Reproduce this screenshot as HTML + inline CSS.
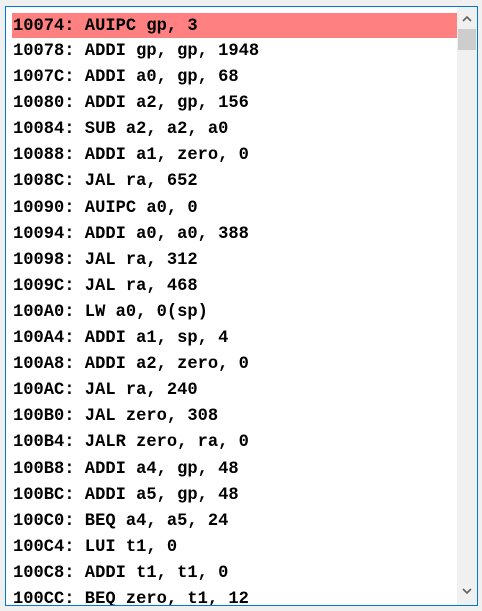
<!DOCTYPE html>
<html><head><style>
body{margin:0;width:482px;height:611px;background:#f0f0f0;position:relative;overflow:hidden}
.box{position:absolute;left:5px;top:6px;width:471px;height:598px;border:1px solid #0078d7;background:#fff;overflow:hidden}
.list{position:absolute;left:6px;top:6px;width:447px}
.r{height:26.1px;line-height:26px;font:bold 17.1px "Liberation Mono",monospace;color:#000;padding-left:1px;white-space:pre}
.r span{position:relative;top:4px}
.r.h{background:#ff8080;height:25px}
.sb{position:absolute;right:0;top:0;width:20px;height:598px;background:#f0f0f0}
.th{position:absolute;left:1px;top:22px;width:18px;height:21px;background:#cdcdcd}
.a{position:absolute;left:5px;width:10px;height:8px}
</style></head><body>
<div class="box">
<div class="list">
<div class="r h"><span>10074: AUIPC gp, 3</span></div>
<div class="r"><span>10078: ADDI gp, gp, 1948</span></div>
<div class="r"><span>1007C: ADDI a0, gp, 68</span></div>
<div class="r"><span>10080: ADDI a2, gp, 156</span></div>
<div class="r"><span>10084: SUB a2, a2, a0</span></div>
<div class="r"><span>10088: ADDI a1, zero, 0</span></div>
<div class="r"><span>1008C: JAL ra, 652</span></div>
<div class="r"><span>10090: AUIPC a0, 0</span></div>
<div class="r"><span>10094: ADDI a0, a0, 388</span></div>
<div class="r"><span>10098: JAL ra, 312</span></div>
<div class="r"><span>1009C: JAL ra, 468</span></div>
<div class="r"><span>100A0: LW a0, 0(sp)</span></div>
<div class="r"><span>100A4: ADDI a1, sp, 4</span></div>
<div class="r"><span>100A8: ADDI a2, zero, 0</span></div>
<div class="r"><span>100AC: JAL ra, 240</span></div>
<div class="r"><span>100B0: JAL zero, 308</span></div>
<div class="r"><span>100B4: JALR zero, ra, 0</span></div>
<div class="r"><span>100B8: ADDI a4, gp, 48</span></div>
<div class="r"><span>100BC: ADDI a5, gp, 48</span></div>
<div class="r"><span>100C0: BEQ a4, a5, 24</span></div>
<div class="r"><span>100C4: LUI t1, 0</span></div>
<div class="r"><span>100C8: ADDI t1, t1, 0</span></div>
<div class="r"><span>100CC: BEQ zero, t1, 12</span></div>
</div>
<div class="sb">
<svg class="a" style="top:8px" viewBox="0 0 10 8"><path d="M1 6L5 2L9 6" fill="none" stroke="#606060" stroke-width="1.6"/></svg>
<div class="th"></div>
<svg class="a" style="top:580px" viewBox="0 0 10 8"><path d="M1 2L5 6L9 2" fill="none" stroke="#606060" stroke-width="1.6"/></svg>
</div>
</div>
</body></html>
